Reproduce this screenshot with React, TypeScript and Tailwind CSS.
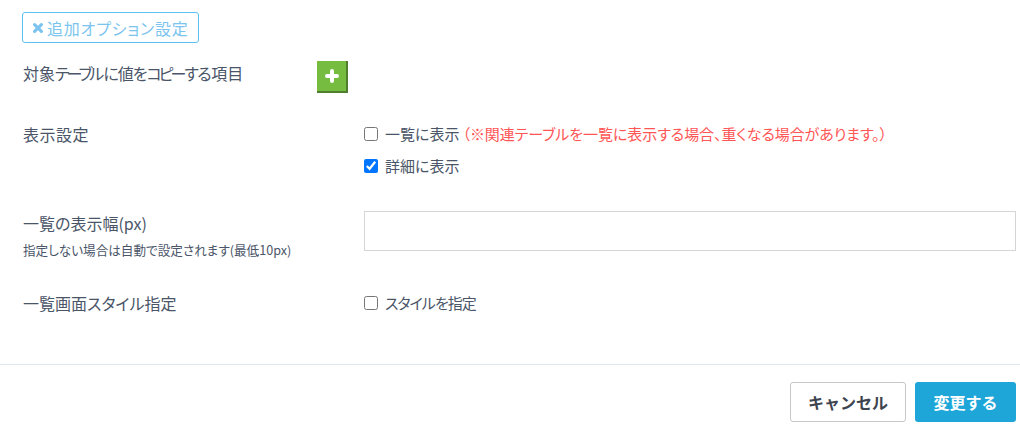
import React from "react";

const font = { fontFamily: '"Noto Sans CJK JP", "Noto Sans", sans-serif' };

function Check({ label, checked, children }: { label: React.ReactNode; checked?: boolean; children?: React.ReactNode }) {
  return (
    <label className="flex items-center h-6 text-[15px] leading-6 text-[#4a5568] whitespace-nowrap [font-feature-settings:'palt']">
      <input type="checkbox" defaultChecked={checked} className="w-[14px] h-[14px] m-0 mr-[7px] shrink-0" />
      <span>{label}</span>
      {children}
    </label>
  );
}

export default function App() {
  return (
    <div className="w-[1020px] h-[429px] bg-white overflow-hidden" style={font}>
      <div className="pl-[22px] pr-[4px] pt-[12px]">
        <button className="flex items-center h-[31px] w-[177px] pl-[9px] border border-[#5cc0f2] rounded-[3px] text-[16px] tracking-[0.8px] text-[#7cc4ee] whitespace-nowrap [font-feature-settings:'palt']">
          <svg viewBox="0 0 12 12" className="w-[12px] h-[12px] mr-[3px]" fill="none">
            <path d="M2.6 2.6 L9.4 9.4 M9.4 2.6 L2.6 9.4" stroke="#7cc4ee" strokeWidth="3.2" strokeLinecap="round" />
          </svg>
          追加オプション設定
        </button>

        <div className="flex mt-[18px] h-[32px]">
          <div className="w-[295px] pl-[1px] text-[16px] leading-6 text-[#4a5568] whitespace-nowrap [font-feature-settings:'palt']">
            対象<span className="tracking-[-3px]">テーブル</span>
            <span className="ml-[2px] tracking-[-1px]">に値を</span>
            <span className="tracking-[-3px]">コピー</span>
            <span className="ml-[1px] tracking-[-1.5px]">する</span><span className="ml-[1px]">項目</span>
          </div>
          <button className="w-[31px] h-[32px] bg-[#76bc41] border-b-[2px] border-r-[2px] border-[#4f7f2c] flex items-center justify-center">
            <svg viewBox="0 0 14 14" className="w-[14px] h-[14px]">
              <path d="M7 2 V12 M2 7 H12" stroke="#fff" strokeWidth="4" strokeLinecap="round" />
            </svg>
          </button>
        </div>

        <div className="flex mt-[29px]">
          <div className="w-[342px] pl-[1px] text-[16px] tracking-[0.5px] leading-6 text-[#4a5568]">表示設定</div>
          <div className="flex flex-col gap-[8px]">
            <Check label="一覧に表示">
              <span className="pl-[3px] tracking-[-0.05px] text-[#ff5555]">（※関連テーブルを一覧に表示する場合、重くなる場合があります。）</span>
            </Check>
            <Check label="詳細に表示" checked />
          </div>
        </div>

        <div className="flex mt-[33px]">
          <div className="w-[342px] pl-[1px]">
            <div className="text-[16px] leading-6 text-[#4a5568] [font-feature-settings:'palt']">一覧の表示幅(px)</div>
            <div className="text-[12.6px] leading-[18px] mt-[6px] text-[#4a5568] whitespace-nowrap [font-feature-settings:'palt']">指定しない場合は自動で設定されます(最低10px)</div>
          </div>
          <input className="w-[652px] h-[40px] border border-[#d5d5d5] bg-white" />
        </div>

        <div className="flex mt-[32px]">
          <div className="w-[342px] pl-[1px] text-[16px] leading-6 text-[#4a5568] [font-feature-settings:'palt']">一覧画面スタイル指定</div>
          <Check label={<span className="tracking-[-1px]">スタイルを指定</span>} />
        </div>
      </div>

      <div className="mt-[49px] border-t border-[#e2e8f0] flex justify-end gap-[9px] pt-[17px] pr-[4px]">
        <button className="w-[116px] h-[40px] bg-white border border-[#c8c8c8] rounded-[3px] text-[16px] font-bold text-[#3d4450]">キャンセル</button>
        <button className="w-[101px] h-[40px] bg-[#1fa6d9] rounded-[3px] text-[16px] font-bold text-white">変更する</button>
      </div>
    </div>
  );
}
